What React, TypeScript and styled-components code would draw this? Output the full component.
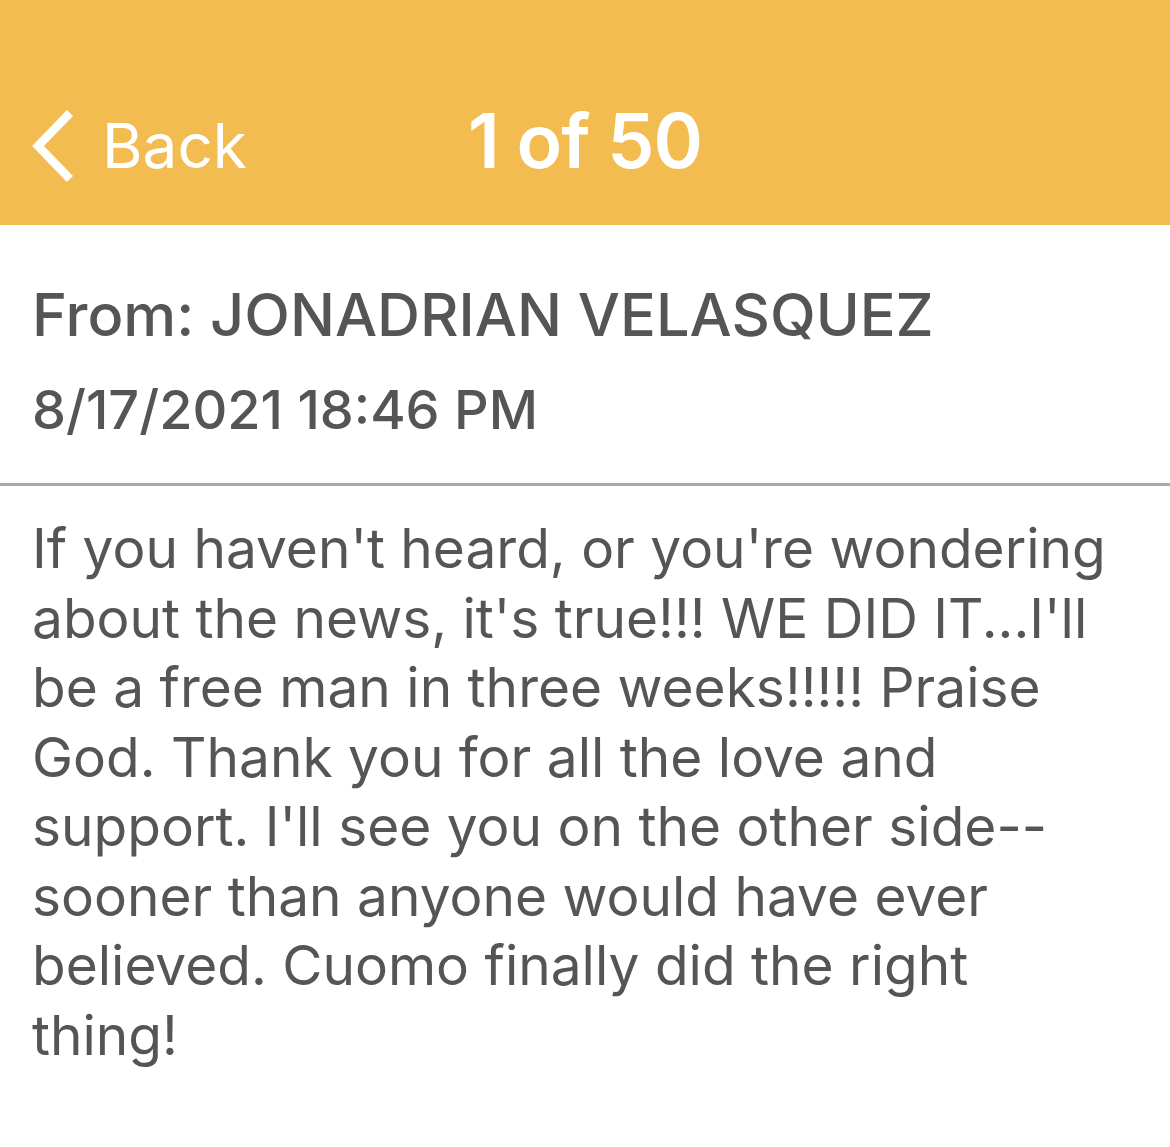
import styled, { createGlobalStyle } from "styled-components";

const GlobalStyle = createGlobalStyle`
  html, body {
    margin: 0;
    padding: 0;
    background: #ffffff;
  }
  body {
    font-family: Inter, Roboto, "Liberation Sans", sans-serif;
  }
`;

const MESSAGE = {
  index: 1,
  total: 50,
  from: "JONADRIAN VELASQUEZ",
  date: "8/17/2021 18:46 PM",
  body:
    "If you haven't heard, or you're wondering about the news, it's true!!! WE DID IT...I'll be a free man in three weeks!!!!! Praise God. Thank you for all the love and support. I'll see you on the other side--sooner than anyone would have ever believed. Cuomo finally did the right thing!",
};

export default function App() {
  return (
    <SCPage>
      <GlobalStyle />
      <SCHeader>
        <SCBack>
          <svg width="44" height="72" viewBox="0 0 44 72" fill="none">
            <path
              d="M37 6 L8 36 L37 66"
              stroke="#ffffff"
              strokeWidth="8.5"
              strokeLinecap="square"
              strokeLinejoin="miter"
            />
          </svg>
          <span>Back</span>
        </SCBack>
        <SCTitle>
          {MESSAGE.index} of {MESSAGE.total}
        </SCTitle>
      </SCHeader>

      <SCMeta>
        <SCLine $size={59.5}>From: {MESSAGE.from}</SCLine>
        <SCLine $size={54}>{MESSAGE.date}</SCLine>
      </SCMeta>

      <SCBody>{MESSAGE.body}</SCBody>
    </SCPage>
  );
}

const SCPage = styled.div`
  width: 1170px;
  min-height: 1147px;
  background: #ffffff;
  color: #555555;
`;

const SCHeader = styled.header`
  height: 225px;
  background: #f2bc50;
  display: grid;
  grid-template-columns: 468px 1fr;
  align-items: center;
  box-sizing: border-box;
  padding-top: 56px;
`;

const SCBack = styled.div`
  display: flex;
  align-items: center;
  gap: 28px;
  padding-left: 30px;
  color: #ffffff;
  font-size: 62px;
  font-weight: 400;
  margin-top: 10px;

  svg {
    display: block;
  }
`;

const SCTitle = styled.div`
  color: #ffffff;
  font-size: 75px;
  font-weight: 600;
  letter-spacing: -1px;
`;

const SCMeta = styled.div`
  display: flex;
  flex-direction: column;
  gap: 30px;
  padding: 56px 32px 40px;
  border-bottom: 3px solid #aaaaaa;
`;

const SCLine = styled.div<{ $size: number }>`
  font-size: ${(p) => p.$size}px;
  font-weight: 500;
  line-height: 66px;
`;

const SCBody = styled.p`
  margin: 0;
  padding: 28px 55px 28px 32px;
  font-size: 55px;
  line-height: 69.5px;
`;
